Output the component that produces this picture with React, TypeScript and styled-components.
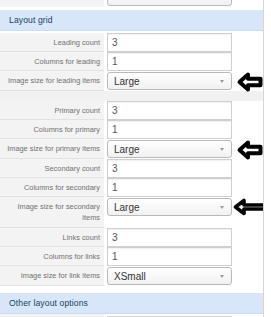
import React from "react";
import styled, { createGlobalStyle } from "styled-components";

const GlobalStyle = createGlobalStyle`
  html, body {
    margin: 0;
    padding: 0;
    background: #ffffff;
    font-family: "Liberation Sans", Arial, sans-serif;
  }
`;

const labelBg = "#f3f3f3";
const rowLine = "#e2e2e2";
const headerBg = "#d7e7f9";

const Panel = styled.div`
  width: 264px;
  height: 317px;
  overflow: hidden;
  border-right: 1px solid #d6d6d6;
  box-sizing: border-box;
`;

const Stub = styled.div<{ align: "top" | "bottom" }>`
  display: flex;
  height: 7px;
  overflow: hidden;
  align-items: ${({ align }) => (align === "top" ? "flex-start" : "flex-end")};
`;

const StubLabel = styled.div`
  width: 104px;
  align-self: stretch;
  background: ${labelBg};
`;

const SectionHeader = styled.div<{ gap: number }>`
  margin-top: ${({ gap }) => gap}px;
  height: 20px;
  display: flex;
  align-items: center;
  padding-left: 9px;
  background: ${headerBg};
  border-bottom: 1px solid #c9dcf1;
  color: #203f63;
  font-size: 8.6px;
  letter-spacing: 0.1px;
`;

const Table = styled.div<{ gap: number }>`
  margin-top: ${({ gap }) => gap}px;
  display: flex;
  flex-direction: column;
`;

const Row = styled.div<{ tall?: boolean; select?: boolean }>`
  position: relative;
  display: flex;
  min-height: ${({ tall, select }) => (tall ? 31 : select ? 20 : 19)}px;
`;

const Label = styled.div<{ tall?: boolean }>`
  width: 104px;
  box-sizing: border-box;
  padding: ${({ tall }) => (tall ? "4px 4px 0 6px" : "0 4px 0 2px")};
  background: ${labelBg};
  border-bottom: 1px solid ${rowLine};
  display: flex;
  align-items: ${({ tall }) => (tall ? "flex-start" : "center")};
  justify-content: flex-end;
  text-align: right;
  white-space: ${({ tall }) => (tall ? "normal" : "nowrap")};
  color: #707070;
  font-size: 7.4px;
  line-height: 11px;
`;

const Field = styled.div<{ tall?: boolean }>`
  padding-left: 3px;
  display: flex;
  align-items: ${({ tall }) => (tall ? "flex-start" : "center")};
  padding-top: ${({ tall }) => (tall ? 1 : 0)}px;
`;

const TextInput = styled.div<{ offset?: number }>`
  width: 125px;
  height: 19px;
  margin-top: ${({ offset }) => offset ?? 0}px;
  box-sizing: border-box;
  border: 1px solid #cfcfcf;
  box-shadow: inset 0 1px 1px rgba(0, 0, 0, 0.06);
  background: #ffffff;
  padding-left: 4px;
  display: flex;
  align-items: center;
  color: #555;
  font-size: 10px;
`;

const Select = styled.div<{ offset?: number }>`
  width: 125px;
  height: 18px;
  margin-bottom: ${({ offset }) => offset ?? 0}px;
  box-sizing: border-box;
  border: 1px solid #b9b9b9;
  border-radius: 3px;
  background: linear-gradient(#ffffff, #f1f1f1);
  padding: 0 7px 0 6px;
  display: flex;
  align-items: center;
  justify-content: space-between;
  color: #333;
  font-size: 10px;
`;

const Caret = styled.span`
  width: 0;
  height: 0;
  border-left: 2.5px solid transparent;
  border-right: 2.5px solid transparent;
  border-top: 3px solid #9a9a9a;
`;

const GapBand = styled.div<{ h: number; tone: string }>`
  height: ${({ h }) => h}px;
  background: ${({ tone }) => tone};
`;

const Annotation = styled.svg<{ left: number; top: number }>`
  position: absolute;
  left: ${({ left }) => left}px;
  top: ${({ top }) => top}px;
  overflow: visible;
`;

type ArrowKind = "wide" | "long";

const Arrow: React.FC<{ kind: ArrowKind; left: number; top: number }> = ({
  kind,
  left,
  top,
}) =>
  kind === "wide" ? (
    <Annotation left={left} top={top} width="26" height="20" viewBox="0 0 26 20">
      <polygon
        points="2.5,10 11,2.5 11,6.8 23.5,6.8 23.5,13.2 11,13.2 11,17.5"
        fill="#ffffff"
        stroke="#000000"
        strokeWidth="4"
        strokeLinejoin="round"
      />
    </Annotation>
  ) : (
    <Annotation left={left} top={top} width="37" height="18" viewBox="0 0 37 18">
      <polygon
        points="2.5,9 11,2.5 11,7 35,7 35,11 11,11 11,15.5"
        fill="#ffffff"
        stroke="#000000"
        strokeWidth="3.6"
        strokeLinejoin="round"
      />
    </Annotation>
  );

type Item = {
  label: string;
  value: string;
  select?: boolean;
  tall?: boolean;
  arrow?: ArrowKind;
};

const leading: Item[] = [
  { label: "Leading count", value: "3" },
  { label: "Columns for leading", value: "1" },
  { label: "Image size for leading items", value: "Large", select: true, arrow: "wide" },
];

const rest: Item[] = [
  { label: "Primary count", value: "3" },
  { label: "Columns for primary", value: "1" },
  { label: "Image size for primary items", value: "Large", select: true, arrow: "wide" },
  { label: "Secondary count", value: "3" },
  { label: "Columns for secondary", value: "1" },
  {
    label: "Image size for secondary items",
    value: "Large",
    select: true,
    tall: true,
    arrow: "long",
  },
  { label: "Links count", value: "3" },
  { label: "Columns for links", value: "1" },
  { label: "Image size for link items", value: "XSmall", select: true },
];

const FieldRow: React.FC<{ item: Item }> = ({ item }) => (
  <Row tall={item.tall} select={item.select}>
    <Label tall={item.tall}>{item.label}</Label>
    <Field tall={item.tall}>
      {item.select ? (
        <Select>
          {item.value}
          <Caret />
        </Select>
      ) : (
        <TextInput>{item.value}</TextInput>
      )}
    </Field>
    {item.arrow === "wide" && <Arrow kind="wide" left={237} top={1} />}
    {item.arrow === "long" && <Arrow kind="long" left={233} top={1} />}
  </Row>
);

export default function App() {
  return (
    <>
      <GlobalStyle />
      <Panel>
        <Stub align="bottom">
          <StubLabel />
          <Field>
            <Select offset={1} />
          </Field>
        </Stub>
        <SectionHeader gap={3}>Layout grid</SectionHeader>
        <Table gap={2}>
          {leading.map((item) => (
            <FieldRow key={item.label} item={item} />
          ))}
        </Table>
        <GapBand h={10} tone="#f1f1f1" />
        <Table gap={0}>
          {rest.map((item) => (
            <FieldRow key={item.label} item={item} />
          ))}
        </Table>
        <GapBand h={7} tone="#ffffff" />
        <SectionHeader gap={0}>Other layout options</SectionHeader>
        <Stub align="top">
          <StubLabel />
          <Field>
            <TextInput offset={2} />
          </Field>
        </Stub>
      </Panel>
    </>
  );
}
